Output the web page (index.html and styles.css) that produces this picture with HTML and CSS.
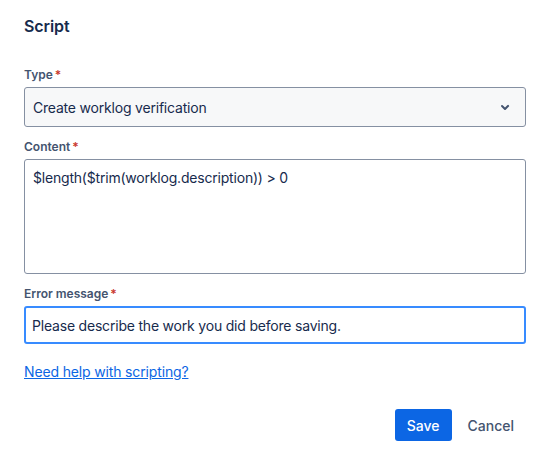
FILE: index.html
```html
<!DOCTYPE html>
<html>
<head>
<meta charset="utf-8">
<link rel="stylesheet" href="styles.css">
</head>
<body>
<div class="dialog">
  <h1 class="title">Script</h1>
  <div class="field field-first">
    <div class="label">Type<span class="req">*</span></div>
    <div class="select">
      <span>Create worklog verification</span>
      <svg class="chev" width="24" height="24" viewBox="0 0 24 24"><path d="M8.3 10.3a1 1 0 0 1 1.4 0L12 12.6l2.3-2.3a1 1 0 1 1 1.4 1.4l-3 3a1 1 0 0 1-1.4 0l-3-3a1 1 0 0 1 0-1.4z" fill="#44546F"/></svg>
    </div>
  </div>
  <div class="field">
    <div class="label">Content<span class="req">*</span></div>
    <div class="textarea">$length($trim(worklog.description)) &gt; 0</div>
  </div>
  <div class="field">
    <div class="label">Error message<span class="req">*</span></div>
    <div class="input focused">Please describe the work you did before saving.</div>
  </div>
  <a class="link" href="#">Need help with scripting?</a>
  <div class="actions">
    <button class="btn primary">Save</button>
    <button class="btn subtle">Cancel</button>
  </div>
</div>
</body>
</html>
```

FILE: styles.css
```css
html, body {
  margin: 0;
  padding: 0;
  background: #fff;
}
body {
  font-family: Inter, "Noto Sans", sans-serif;
  color: #172B4D;
}
.dialog {
  padding: 16px 24px 0 24px;
  display: flex;
  flex-direction: column;
}
.title {
  margin: 0;
  font-size: 16px;
  line-height: 20px;
  font-weight: 600;
  color: #172B4D;
  letter-spacing: -0.1px;
}
.field {
  display: flex;
  flex-direction: column;
  margin-top: 12px;
}
.field-first {
  margin-top: 31px;
}
.label {
  font-size: 12px;
  line-height: 16px;
  font-weight: 600;
  color: #44546F;
  margin-bottom: 4px;
}
.req {
  color: #C9372C;
  margin-left: 2px;
}
.select {
  box-sizing: border-box;
  height: 40px;
  border: 1px solid #8590A2;
  border-radius: 3px;
  background: #F7F8F9;
  display: flex;
  align-items: center;
  justify-content: space-between;
  padding: 0 8px 0 8px;
  font-size: 14px;
  letter-spacing: -0.2px;
  color: #172B4D;
}
.chev {
  display: block;
}
.textarea {
  box-sizing: border-box;
  height: 115px;
  border: 1px solid #8590A2;
  border-radius: 3px;
  background: #fff;
  padding: 8px 8px;
  font-size: 14px;
  line-height: 20px;
  letter-spacing: -0.2px;
}
.input {
  box-sizing: border-box;
  height: 38px;
  border-radius: 3px;
  background: #fff;
  padding: 0 6px;
  display: flex;
  align-items: center;
  font-size: 14px;
  letter-spacing: -0.2px;
}
.input.focused {
  border: 2px solid #388BFF;
}
.link {
  margin-top: 18px;
  align-self: flex-start;
  font-size: 14px;
  line-height: 20px;
  letter-spacing: -0.15px;
  color: #0C66E4;
  text-decoration: underline;
}
.actions {
  margin-top: 27px;
  display: flex;
  justify-content: flex-end;
  gap: 4px;
}
.btn {
  font-family: inherit;
  font-size: 14px;
  font-weight: 500;
  height: 32px;
  border: none;
  border-radius: 3px;
  padding: 0 12px;
  cursor: pointer;
}
.primary {
  background: #0C66E4;
  color: #fff;
}
.subtle {
  background: transparent;
  color: #44546F;
}
```
